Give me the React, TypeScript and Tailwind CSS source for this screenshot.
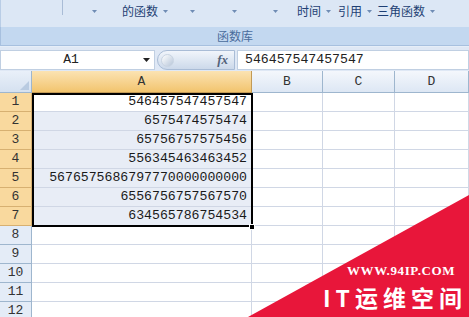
import React from 'react';

const cjk = { fontFamily: '"Noto Sans CJK SC", "Noto Sans", sans-serif' };
const mono = { fontFamily: '"Liberation Mono", "DejaVu Sans Mono", monospace' };

const values = [
  '546457547457547',
  '6575474575474',
  '65756757575456',
  '556345463463452',
  '5676575686797770000000000',
  '6556756757567570',
  '634565786754534',
];

const Caret: React.FC<{ className?: string }> = ({ className }) => (
  <svg width="5" height="3" viewBox="0 0 5 3" className={className}>
    <path d="M0 0h5L2.5 3z" fill="#6f8cb4" />
  </svg>
);

const RibbonItem: React.FC<{ label?: string; ml: string }> = ({ label, ml }) => (
  <div className={`flex items-center gap-[5px] h-[14px] ${ml}`}>
    {label && <span className="text-[12px] leading-none text-[#1e3f74]">{label}</span>}
    <Caret />
  </div>
);

const App: React.FC = () => {
  const rows = Array.from({ length: 12 }, (_, i) => i + 1);

  return (
    <div className="relative w-[469px] h-[317px] overflow-hidden bg-white" style={cjk}>
      {/* ribbon */}
      <div className="h-[27px] bg-[#dce7f5] flex items-start pt-[4px] border-l border-[#b9cde6]">
        <div className="ml-[61px] -mt-[4px] w-px h-[15px] bg-[#a9bcd6]" />
        <RibbonItem ml="ml-[29px]" />
        <RibbonItem label="的函数" ml="ml-[25px]" />
        <RibbonItem ml="ml-[22px]" />
        <RibbonItem ml="ml-[37px]" />
        <RibbonItem ml="ml-[36px]" />
        <RibbonItem label="时间" ml="ml-[19px]" />
        <RibbonItem label="引用" ml="ml-[7px]" />
        <RibbonItem label="三角函数" ml="ml-[5px]" />
      </div>
      <div className="h-[19px] bg-[#c3d8f0] border-l border-b border-[#a7c0df] flex items-center justify-center">
        <span className="text-[12px] leading-none text-[#4a6c9c]">函数库</span>
      </div>
      <div className="h-px bg-[#e6eef8]" />

      {/* formula bar */}
      <div className="h-[24px] bg-[#dfe8f5] flex items-center pt-[2px]">
        <div className="w-[155px] h-[20px] bg-white border border-[#c0cfe2] flex items-center">
          <span className="flex-1 text-center text-[13px] text-[#222] pr-[2px]" style={mono}>A1</span>
          <svg width="7" height="4" viewBox="0 0 7 4" className="mr-[4px]">
            <path d="M0 0h7L3.5 4z" fill="#222" />
          </svg>
        </div>
        <div className="ml-[2px] w-[78px] h-[20px] rounded-l-full bg-gradient-to-b from-[#f1f5fb] to-[#ccd9ea] border border-[#a9bcd6] flex items-center justify-between pl-[3px] pr-[6px]">
          <div className="w-[13px] h-[13px] rounded-full bg-gradient-to-br from-[#ffffff] to-[#b7c6d9] border border-[#c9d4e2]" />
          <span className="text-[13px] italic font-bold text-[#53627a]" style={{ fontFamily: '"Liberation Serif", serif' }}>
            fx
          </span>
        </div>
        <div className="ml-[2px] flex-1 h-[20px] bg-white border border-[#c0cfe2] flex items-center pl-[7px]">
          <span className="text-[13.2px] text-[#222]" style={mono}>546457547457547</span>
        </div>
      </div>

      {/* grid */}
      <div className="grid grid-cols-[32px_220px_71px_72px_74px]" style={mono}>
        <div className="h-[22px] bg-gradient-to-b from-[#e9f0f9] to-[#d5e1f0] border-r border-b border-[#9eb6ce] flex items-end justify-end p-[2px]">
          <svg width="9" height="9" viewBox="0 0 9 9">
            <path d="M9 0v9H0z" fill="#b9cbe1" />
          </svg>
        </div>
        <div className="h-[22px] bg-gradient-to-b from-[#fbe3b2] to-[#f2c46d] border-r border-b border-[#c29a56] flex items-center justify-center text-[13px] text-[#333]">
          A
        </div>
        {['B', 'C', 'D'].map((c) => (
          <div
            key={c}
            className="h-[22px] bg-gradient-to-b from-[#f4f7fc] to-[#dde7f4] border-r border-b border-[#9eb6ce] flex items-center justify-center text-[13px] text-[#333]"
          >
            {c}
          </div>
        ))}

        {rows.map((r) => {
          const sel = r <= 7;
          return (
            <React.Fragment key={r}>
              <div
                className={`h-[19px] border-r border-b flex items-center justify-center text-[13px] text-[#333] ${
                  sel ? 'bg-[#f9d99e] border-[#d7b071]' : 'bg-[#e4ecf7] border-[#9eb6ce]'
                }`}
              >
                {r}
              </div>
              <div
                className={`h-[19px] border-r border-b border-[#d0d7e5] flex items-center justify-end pr-[4px] text-[13.2px] text-[#1a1a1a] ${
                  sel && r > 1 ? 'bg-[#e8edf6]' : 'bg-white'
                }`}
              >
                {sel ? values[r - 1] : ''}
              </div>
              <div className="h-[19px] border-r border-b border-[#d0d7e5]" />
              <div className="h-[19px] border-r border-b border-[#d0d7e5]" />
              <div className="h-[19px] border-r border-b border-[#d0d7e5]" />
            </React.Fragment>
          );
        })}
      </div>

      {/* selection outline A1:A7 */}
      <div className="absolute left-[32px] top-[93px] w-[221px] h-[134px] border-2 border-black pointer-events-none" />
      <div className="absolute left-[249px] top-[224px] w-[6px] h-[6px] bg-black border border-white" />

      {/* watermark */}
      <svg className="absolute left-0 top-0" width="469" height="317" viewBox="0 0 469 317">
        <polygon points="248,317 469,195 469,317" fill="#e8163a" />
      </svg>
      <div className="absolute left-[347px] top-[264px] h-[13px] text-[13px] font-bold text-white leading-[13px] tracking-[0.6px]" style={{ fontFamily: '"Liberation Serif", serif' }}>
        WWW.94IP.COM
      </div>
      <div className="absolute left-[323px] top-[285px] h-[24px] text-[23px] font-bold text-white leading-[24px] tracking-[5px] whitespace-nowrap" style={cjk}>
        IT运维空间
      </div>
    </div>
  );
};

export default App;
